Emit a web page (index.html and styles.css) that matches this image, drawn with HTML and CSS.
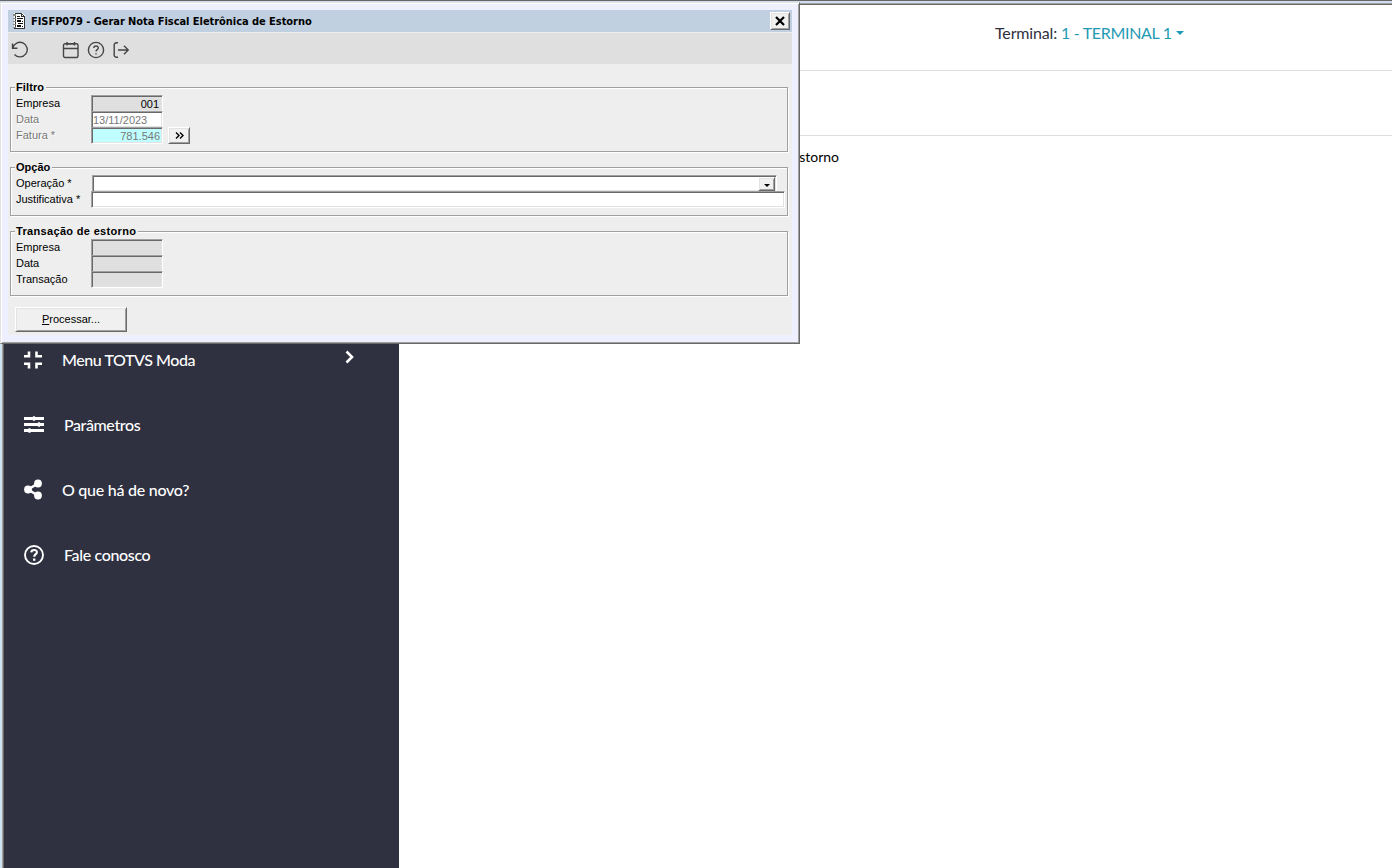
FILE: index.html
```
<!DOCTYPE html>
<html lang="pt-BR">
<head>
    <meta charset="UTF-8">
    <title>FISFP079 - Gerar Nota Fiscal Eletrônica de Estorno</title>
    <link rel="stylesheet" href="styles.css">
</head>
<body>
    <div class="app">
        <div class="sidebar">
            <a class="menu-item">
                <svg width="20" height="20" viewBox="0 0 20 20"><path d="M5 1.500v4.700H0M12.500 1.500v4.700H18M5 18.500v-4.700H0M12.500 18.500v-4.700H18" fill="none" stroke="#fff" stroke-width="2.600"/></svg>
                <span class="t-menu">Menu TOTVS Moda</span>
                <svg class="arrow" width="12" height="16" viewBox="0 0 12 16"><path d="M2.5 2.5L8 8l-5.5 5.5" fill="none" stroke="#fff" stroke-width="2.6"/></svg>
            </a>
            <a class="menu-item wide">
                <svg width="20" height="20" viewBox="0 0 20 20"><path d="M0 3.500h20M0 9.500h20M0 15.500h20" stroke="#fff" stroke-width="2.800"/><path d="M10 1.200v4.600M15 7.200v4.600M5.500 13.200v4.600" stroke="#fff" stroke-width="2.200"/></svg>
                <span class="t-param">Parâmetros</span>
            </a>
            <a class="menu-item">
                <svg width="20" height="22" viewBox="0 0 20 22"><path d="M14 4.500L4 10.500l10 6" fill="none" stroke="#fff" stroke-width="2.600"/><circle cx="14" cy="4.500" r="3.900" fill="#fff"/><circle cx="4" cy="10.500" r="3.900" fill="#fff"/><circle cx="14" cy="16.500" r="3.900" fill="#fff"/></svg>
                <span class="t-novo">O que há de novo?</span>
            </a>
            <a class="menu-item wide">
                <svg width="20" height="20" viewBox="0 0 20 20"><circle cx="10" cy="10" r="9" fill="none" stroke="#fff" stroke-width="1.900"/><path d="M7.200 7.400c.3-3.300 5.700-3.200 5.700-.2 0 2-2.700 2-2.700 4.600" fill="none" stroke="#fff" stroke-width="2.100"/><path d="M9 13.500h2.400v2.300H9z" fill="#fff"/></svg>
                <span class="t-fale">Fale conosco</span>
            </a>
        </div>
        <div class="main">
            <div class="topbar">
                <span class="t-terminal">Terminal:</span>
                <a class="t-link">1 - TERMINAL 1</a>
                <i class="caret"></i>
            </div>
            <div class="subbar"></div>
            <div class="crumb">Gerar Nota Fiscal Eletrônica de Estorno</div>
        </div>
    </div>

    <div class="window">
        <div class="titlebar">
            <svg width="13" height="16" viewBox="0 0 13 16" shape-rendering="crispEdges"><path d="M1 0h8l3 3v13H1z" fill="#fff"/><path d="M2 0h7v1H2zM2 0h1v16H2zM11 4h1v12h-1zM1 15h11v1H1zM8 0h1v3h3v1H8zM9 1h1v1H9zM10 2h1v1h-1z" fill="#333"/><path d="M0 1h3v2H0zM0 5h3v1H0zM0 8h3v1H0zM0 11h3v1H0zM0 14h3v1H0z" fill="#888"/><path d="M4 3h3v1H4zM4 5h6v1H4zM4 7h4v2H4zM5 10h5v1H5zM4 12h4v2H4zM9 8h1v1H9zM9 13h1v1H9z" fill="#111"/></svg>
            <h1>FISFP079 - Gerar Nota Fiscal Eletrônica de Estorno</h1>
            <button class="close"><svg width="11" height="10" viewBox="0 0 11 10"><path d="M1 1l8 8M9 1l-8 8" stroke="#000" stroke-width="2.200"/></svg></button>
        </div>
        <div class="toolbar">
            <svg class="undo" width="18" height="18" viewBox="0 0 18 18"><path d="M1.500 2.500v4.800h5M1.800 7A7.300 7.300 0 1 1 3.500 13.500"/></svg>
            <svg width="18" height="18" viewBox="0 0 18 18"><rect x="1.500" y="2.800" width="14.500" height="13.700" rx="1.500"/><path d="M1.500 7.500H16M5 1v3.500M12.500 1v3.500M5 2.800h7.500"/></svg>
            <svg width="18" height="18" viewBox="0 0 18 18"><circle cx="9" cy="9" r="7.600"/><path d="M6.800 7c.2-2.800 4.600-2.600 4.500 0 0 1.600-2.300 1.700-2.300 3.500M9 12.200v1.200"/></svg>
            <svg width="18" height="18" viewBox="0 0 18 18"><path d="M6 1.800H4.200a2 2 0 0 0-2 2v10.400a2 2 0 0 0 2 2H6M6 9h10M12 4.800L16.200 9 12 13.200"/></svg>
        </div>
        <div class="form">
            <div class="group filtro">
                <h2 class="t-filtro">Filtro</h2>
                <div class="row"><label>Empresa</label><div class="field gray right code">001</div></div>
                <div class="row dim"><label>Data</label><div class="field">13/11/2023</div></div>
                <div class="row dim"><label>Fatura *</label><div class="field cyan right">781.546</div><button class="search"><svg width="9" height="7" viewBox="0 0 9 7"><path d="M1 .5l3 3-3 3M5 .5l3 3-3 3" fill="none" stroke="#000" stroke-width="1.400"/></svg></button></div>
            </div>
            <div class="group opcao">
                <h2 class="t-opcao">Opção</h2>
                <div class="row"><label>Operação *</label><div class="field select"><button class="drop"><i></i></button></div></div>
                <div class="row"><label>Justificativa *</label><div class="field long"></div></div>
            </div>
            <div class="group estorno">
                <h2 class="t-trans">Transação de estorno</h2>
                <div class="row"><label>Empresa</label><div class="field gray"></div></div>
                <div class="row"><label>Data</label><div class="field gray"></div></div>
                <div class="row"><label>Transação</label><div class="field gray"></div></div>
            </div>
            <button class="process"><span><u>P</u>rocessar...</span></button>
        </div>
    </div>
</body>
</html>
```
FILE: styles.css
```
*{
    margin: 0;
    padding: 0;
    box-sizing: border-box;
}
body{
    width: 1392px;
    height: 868px;
    overflow: hidden;
    position: relative;
    background-color: #fff;
    font-family: "Liberation Sans", Arial, sans-serif;
}
svg{
    display: block;
    flex: none;
}
button{
    font: inherit;
    display: flex;
    align-items: center;
    justify-content: center;
    background-color: #f0f0f0;
    border: 1px solid;
    border-color: #fff #696969 #696969 #fff;
    box-shadow: inset 1px 1px #e3e3e3, inset -1px -1px #a0a0a0;
}
/* 背景页面 */
.app{
    height: 868px;
    display: flex;
    border-top: 1px solid #666;
    box-shadow: inset 0 2px #cfdcf0, inset 0 3px #a0a0a0, inset 0 4px #696969;
    padding-top: 4px;
}
.sidebar{
    width: 399px;
    padding: 322px 0 0 20px;
    background-color: #2f3040;
    border-left: 4px solid #696969;
    border-image: linear-gradient(90deg, #cfe2f0 0 2px, #a0a0a0 2px 3px, #696969 3px 4px) 0 0 0 4;
}
.menu-item{
    height: 65px;
    display: flex;
    align-items: center;
    gap: 18px;
    color: #fff;
    font: 500 16px/20px Lato, sans-serif;
    white-space: nowrap;
}
.menu-item.wide{
    gap: 20px;
}
.menu-item span{
    padding-top: 1px;
}
.t-menu{
    letter-spacing: -0.43px;
}
.t-param{
    letter-spacing: -0.4px;
}
.t-novo{
    letter-spacing: -0.26px;
}
.t-fale{
    letter-spacing: -0.35px;
}
.menu-item .arrow{
    margin: -5px 43px 0 auto;
}
.main{
    flex: 1;
}
.topbar{
    height: 66px;
    display: flex;
    align-items: center;
    padding: 0 0 9px 596px;
    border-bottom: 1px solid #ddd;
    font: 16px/20px Lato, sans-serif;
    color: #2f3040;
    white-space: nowrap;
}
.t-terminal{
    letter-spacing: -0.15px;
}
.t-link{
    margin-left: 4px;
    color: #1f9ab4;
    letter-spacing: -0.32px;
}
.caret{
    margin-left: 4px;
    border: 4px solid transparent;
    border-top-color: #1f9ab4;
    border-bottom: 0;
}
.subbar{
    height: 65px;
    border-bottom: 1px solid #ddd;
}
.crumb{
    width: 440px;
    padding-top: 12px;
    font: 14px/18px Lato, sans-serif;
    text-align: right;
    color: #000;
}
/* 窗口 */
.window{
    position: absolute;
    left: 0;
    top: 2px;
    width: 800px;
    height: 342px;
    padding: 7px 6px 7px 7px;
    background-color: #eef0ff;
    border: 1px solid;
    border-color: #e3e3e3 #696969 #696969 #e3e3e3;
    box-shadow: inset 1px 1px #fff, inset -1px -1px #a0a0a0;
}
.titlebar{
    width: 784px;
    height: 22px;
    display: flex;
    align-items: center;
    padding: 0 2px 0 5px;
    background-color: #c0d0e0;
}
.titlebar h1{
    margin-left: 5px;
    padding-top: 1px;
    flex: 1;
    font: bold 11px/16px "DejaVu Sans Condensed", "DejaVu Sans", sans-serif;
    letter-spacing: -0.05px;
    white-space: nowrap;
}
.close{
    width: 20px;
    height: 18px;
}
.toolbar{
    width: 784px;
    height: 32px;
    border-top: 1px solid #eee;
    display: flex;
    align-items: center;
    gap: 7px;
    padding: 3px 0 0 3px;
    background-color: #dfdfdf;
}
.toolbar svg{
    fill: none;
    stroke: #454545;
    stroke-width: 1.4;
}
.toolbar .undo{
    margin-right: 26px;
}
.form{
    width: 784px;
    height: 271px;
    padding: 23px 4px 0 2px;
    background-color: #eee;
    font-size: 11px;
}
.group{
    width: 778px;
    padding: 7px 0 0 5px;
    border: 1px solid #a0a0a0;
    box-shadow: inset 1px 1px #fff, 1px 1px #fff;
}
.filtro{
    height: 65px;
}
.opcao,
.estorno{
    margin-top: 15px;
    height: 49px;
}
.estorno{
    height: 65px;
}
.group h2{
    width: max-content;
    height: 14px;
    margin: -15px 0 1px -1px;
    padding: 0 2px 0 1px;
    background-color: #eee;
    font-size: 11px;
    line-height: 15px;
    white-space: nowrap;
}
.group .t-filtro{
    letter-spacing: 0.1px;
}
.group .t-trans{
    letter-spacing: 0.33px;
}
.row{
    height: 16px;
    display: flex;
    line-height: 15px;
    color: #000;
    white-space: nowrap;
}
.row label{
    width: 75px;
    padding-top: 1px;
}
.row.dim{
    color: #777;
}
.row.dim label{
    text-shadow: 1px 1px #fff;
}
.field{
    width: 72px;
    height: 17px;
    padding: 1px 2px 0 1px;
    background-color: #fff;
    border: 1px solid;
    border-color: #a0a0a0 #fff #fff #a0a0a0;
    box-shadow: inset 1px 1px #696969, inset -1px -1px #e3e3e3;
}
.gray{
    background-color: #dfdfdf;
}
.cyan{
    background-color: #c0ffff;
}
.right{
    text-align: right;
}
.code{
    padding-right: 3px;
}
.search{
    width: 22px;
    height: 17px;
    margin-left: 5px;
}
.select{
    width: 685px;
    margin-left: 1px;
    padding: 0 1px 0 0;
    display: flex;
    justify-content: flex-end;
}
.drop{
    width: 17px;
    height: 14px;
    margin: 1px 0 0 0;
}
.drop i{
    margin-top: 3px;
    border: 3px solid transparent;
    border-top-color: #000;
    border-bottom: 0;
}
.long{
    width: 694px;
}
.process{
    width: 112px;
    height: 25px;
    margin: 11px 0 0 5px;
}
.process span{
    padding-bottom: 1px;
}
```
